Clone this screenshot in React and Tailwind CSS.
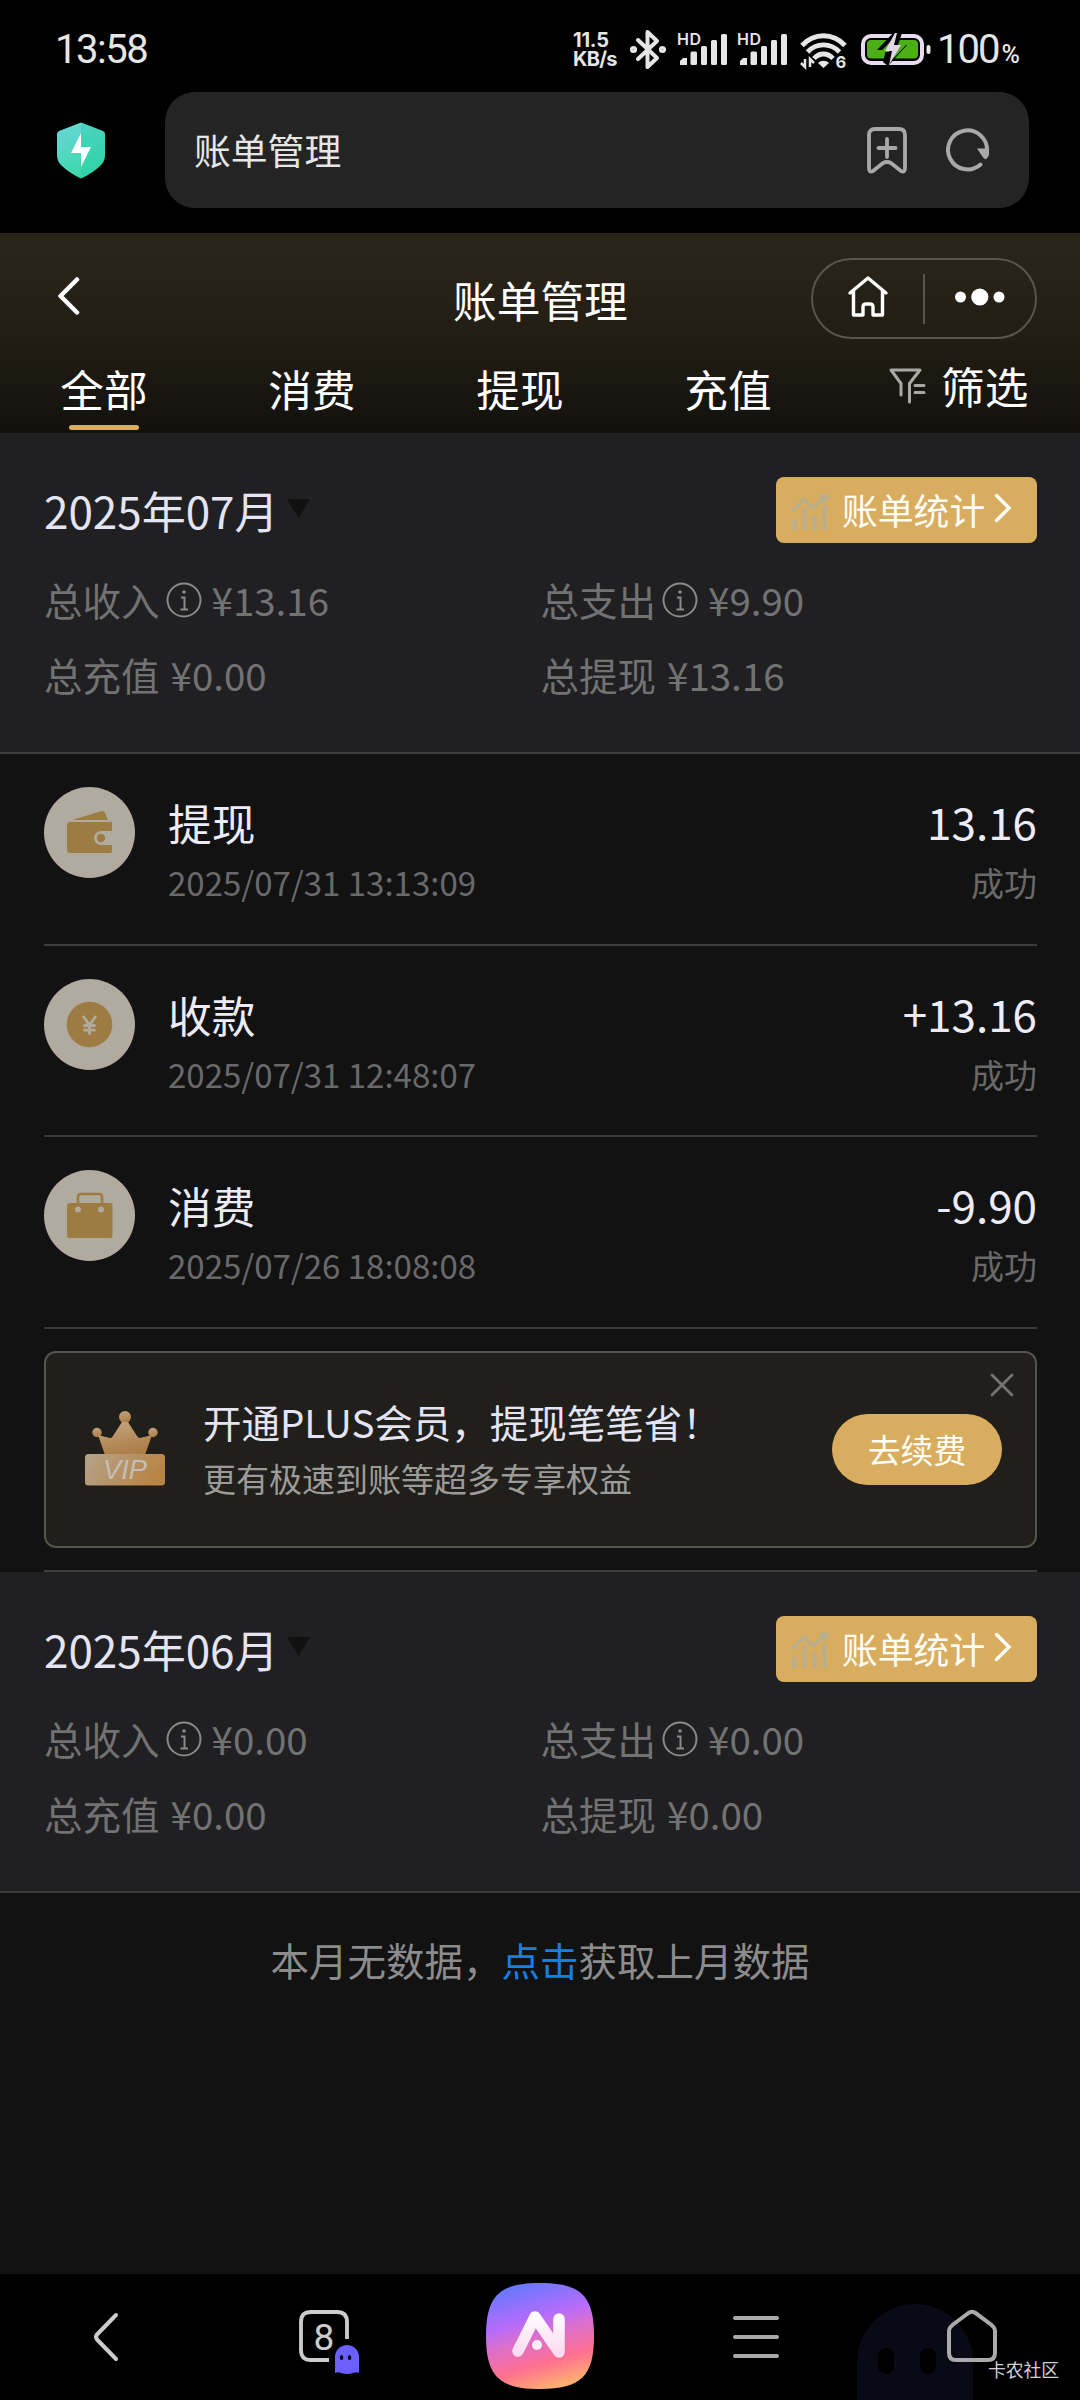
const STATS_JULY = [
  { label: '总收入', value: '¥13.16', info: true },
  { label: '总支出', value: '¥9.90', info: true },
  { label: '总充值', value: '¥0.00' },
  { label: '总提现', value: '¥13.16' },
];

const STATS_JUNE = [
  { label: '总收入', value: '¥0.00', info: true },
  { label: '总支出', value: '¥0.00', info: true },
  { label: '总充值', value: '¥0.00' },
  { label: '总提现', value: '¥0.00' },
];

const RECORDS = [
  { icon: WalletIcon, title: '提现', time: '2025/07/31 13:13:09', amount: '13.16' },
  { icon: CoinIcon, title: '收款', time: '2025/07/31 12:48:07', amount: '+13.16' },
  { icon: BagIcon, title: '消费', time: '2025/07/26 18:08:08', amount: '-9.90' },
];

const TABS = ['全部', '消费', '提现', '充值'];

/* ---------- 状态栏 ---------- */

function Signal() {
  return (
    <svg width="52" height="40" viewBox="0 0 52 40" fill="#e6e6e6">
      <text x="0" y="16.500" fontSize="16" fontWeight="600" textLength="24" fontFamily="Inter, sans-serif">HD</text>
      <path d="M3 37v-4l3-3h4v7z" />
      <rect x="13.500" y="23.500" width="6.500" height="13.500" rx="1.500" />
      <rect x="24" y="18" width="6" height="19" rx="1.500" />
      <rect x="34" y="12" width="6" height="25" rx="1.500" />
      <rect x="44" y="6" width="6" height="31" rx="1.500" />
    </svg>
  );
}

function StatusBar() {
  return (
    <div className="flex h-[92px] items-start pt-7 text-[#e6e6e6]">
      <div className="ml-[55px] flex-1 font-[Roboto,sans-serif] text-[40px] leading-[43px] tracking-[-1.500px]">13:58</div>
      <div className="mt-[3px] w-[57px] font-[Inter,sans-serif] text-[20px] leading-[19px] font-bold">
        <div className="tracking-[-0.200px]">11.5</div>
        <div className="tracking-[-0.700px]">KB/s</div>
      </div>
      <svg className="mr-[11px]" width="36" height="42" viewBox="0 0 36 42" fill="none" stroke="#e6e6e6" strokeWidth="4" strokeLinejoin="round" strokeLinecap="round">
        <path d="M8 12l19 18-9.500 9V4l9.500 9L8 31" />
        <circle cx="3.500" cy="21.500" r="1.600" />
        <circle cx="32.500" cy="21.500" r="1.600" />
      </svg>
      <div className="mr-[8px]"><Signal /></div>
      <div className="mr-[11px]"><Signal /></div>
      <svg className="mr-[14px]" width="47" height="42" viewBox="0 0 47 42" fill="none" stroke="#e6e6e6" strokeWidth="4.800">
        <path d="M2 17.500c12-13 31-13 43 0M7.500 24c9-9.500 23-9.500 32 0M14 30.500c5.500-6 13.500-6 19 0" />
        <path d="M18 35c3-3 8-3 11 0l-5.500 5z" fill="#e6e6e6" stroke="none" />
        <path d="M5 31v8l-4-4M10 39v-8l4 4" strokeWidth="2.500" />
        <text x="35.500" y="40" fontSize="16.500" fontWeight="700" fill="#e6e6e6" stroke="none" fontFamily="Inter, sans-serif">6</text>
      </svg>
      <svg className="mr-[6px]" width="70" height="42" viewBox="0 0 70 42">
        <rect x="2" y="8" width="59" height="27" rx="8" fill="none" stroke="#eadcf0" strokeWidth="4" />
        <rect x="6" y="12" width="51" height="18.500" rx="4" fill="#4caf16" />
        <rect x="65.500" y="17" width="4" height="9" rx="2" fill="#e6e6e6" />
        <path d="M35 2L16 22h9l-3 12 5 4 19-21h-9l4-12z" fill="#000" />
        <path d="M31 12L19 24h9zM32 31l13-14h-9z" fill="#4caf16" />
        <path d="M34 5L24 23h7l-3 14 12-20h-7l3-12z" fill="#e3d6e8" />
      </svg>
      <div className="flex w-[143px] items-baseline font-[Roboto,sans-serif]">
        <span className="text-[40px] leading-[43px] tracking-[-2px]">100</span>
        <span className="ml-[3px] text-[25px] font-medium">%</span>
      </div>
    </div>
  );
}

function AddressBar() {
  return (
    <div className="flex h-[141px] items-start">
      <svg className="mt-[30px] ml-[57px]" width="48" height="57" viewBox="0 0 48 57">
        <defs>
          <linearGradient id="shield" x1="0" y1="0" x2="0.500" y2="1">
            <stop offset="0" stopColor="#6cd6da" />
            <stop offset="1" stopColor="#3ad8a8" />
          </linearGradient>
        </defs>
        <path d="M24 0.500L46 9q2 .8 2 3v21q0 6-4 10-8 8-20 13.500Q12 51 4 43q-4-4-4-10V12q0-2.200 2-3z" fill="url(#shield)" />
        <path d="M24 .5L46 9q2 .8 2 3v21q0 6-4 10-8 8-20 13.500z" fill="#12c7a0" opacity=".25" />
        <path d="M24 11L14 31h10v14l10-20H24z" fill="#fff" />
      </svg>
      <div className="ml-[60px] flex h-[116px] w-[864px] items-center rounded-[30px] bg-[#242424] pr-[39px] pl-[29px]">
        <span className="flex-1 text-[36.800px] text-[#e6e6e6]">账单管理</span>
        <svg width="42" height="48" viewBox="0 0 42 48" fill="none" stroke="#a8a8a8" strokeWidth="3.800" strokeLinecap="round" strokeLinejoin="round">
          <path d="M9 3h24q6 0 6 6v33q0 5-4 3l-10-8q-4-2-8 0L7 45q-4 2-4-3V9q0-6 6-6zM21 13v18M12.500 22h17" />
        </svg>
        <svg className="ml-[38px]" width="44" height="46" viewBox="0 0 44 46" fill="none" stroke="#a8a8a8" strokeWidth="4" strokeLinecap="round">
          <path d="M34.500 37.500A19.500 19.500 0 1 1 41 24.500" />
          <path d="M31 21.500h12v6q-2.500 7-5.500 3.500z" fill="#a8a8a8" stroke="none" />
        </svg>
      </div>
    </div>
  );
}

/* ---------- 页面头部 ---------- */

function Header() {
  return (
    <div className="h-[200px] bg-linear-to-b from-[#2b2519] via-[#231e14] to-[#12110d]">
      <div className="flex h-[118px] items-start pt-[25px] text-white">
        <svg className="mt-[19px] ml-[57px]" width="24" height="38" viewBox="0 0 24 38" fill="none" stroke="#fff" strokeWidth="4.500" strokeLinecap="round" strokeLinejoin="round">
          <path d="M20 2.500L3.500 19 20 35.500" />
        </svg>
        <h1 className="ml-[372px] w-[358px] text-[43.700px] leading-[82px]">账单管理</h1>
        <div className="flex h-[81px] w-[226px] items-center rounded-full border-2 border-[#5a554c]">
          <svg className="-mt-1 ml-[34px]" width="42" height="44" viewBox="0 0 42 44" fill="none" stroke="#fff" strokeWidth="3.400" strokeLinejoin="round" strokeLinecap="round">
            <path d="M3 18L21 3l18 15M6.500 16.500V40h9.500V32q0-3 3-3h4q3 0 3 3v8h9.500V16.500" />
          </svg>
          <span className="ml-[34px] h-[50px] w-[2px] bg-[#5a554c]" />
          <svg className="-mt-1 ml-[30px]" width="50" height="18" viewBox="0 0 50 18" fill="#fff">
            <circle cx="5.500" cy="9" r="5.500" />
            <circle cx="24.800" cy="9" r="8.600" />
            <circle cx="44" cy="9" r="5.500" />
          </svg>
        </div>
      </div>
      <div className="flex h-[82px] text-[43.700px] text-white">
        {TABS.map((tab, i) => (
          <div key={tab} className="flex w-[208px] flex-col items-center">
            <span className="mt-[7px] leading-[60px]">{tab}</span>
            {i === 0 && <span className="mt-[7px] h-[5px] w-[70px] rounded-full bg-[#d9ae62]" />}
          </div>
        ))}
        <div className="ml-[57px] flex h-[70px] items-center">
          <svg width="37" height="38" viewBox="0 0 37 38" fill="none" stroke="#a9a8a4" strokeWidth="3" strokeLinecap="round" strokeLinejoin="round">
            <path d="M12 28V16.500L2 3h29L20.500 16.500V35M26 18.500h9M26 25.500h9" />
          </svg>
          <span className="ml-[15px]">筛选</span>
        </div>
      </div>
    </div>
  );
}

/* ---------- 月度汇总 ---------- */

function InfoIcon() {
  return (
    <svg className="mr-[10px] ml-[6px]" width="36" height="36" viewBox="0 0 36 36" fill="none" stroke="#8a8a8a" strokeWidth="2">
      <circle cx="18" cy="18" r="16.500" />
      <path d="M15 15.500h3.500V27M14.500 27.500h7.500" />
      <circle cx="18" cy="10" r="1.800" fill="#8a8a8a" stroke="none" />
    </svg>
  );
}

function MonthSummary({ month, stats }) {
  return (
    <div className="h-[321px] border-b-2 border-[#3c3c3c] bg-[#202022] px-[44px] pt-[44px]">
      <div className="flex h-[66px] items-center">
        <span className="text-[44px] leading-[66px] text-[#e4e4f2]">{month}</span>
        <svg className="-mt-1 ml-[8px]" width="23" height="19" viewBox="0 0 23 19" fill="#111">
          <path d="M0 0h23L11.500 19z" />
        </svg>
        <div className="-mr-px ml-auto flex h-[66px] w-[261px] items-center rounded-lg bg-[#d9ad60] pl-[14px] text-[#fffdf5]">
          <svg className="mt-1" width="39" height="39" viewBox="0 0 39 39" fill="none" stroke="#bbae8a" strokeWidth="4.500">
            <path d="M2 18L14 6l9 9L34 4" strokeWidth="3.500" />
            <path d="M4.500 37V26M14.500 37V15M24.500 37V22M34.500 37V12" />
            <circle cx="34" cy="5" r="2.500" />
          </svg>
          <span className="ml-[13px] text-[35.800px]">账单统计</span>
          <svg className="-mt-1 ml-[9px]" width="18" height="30" viewBox="0 0 18 30" fill="none" stroke="#fffdf5" strokeWidth="3.500" strokeLinecap="round">
            <path d="M2.500 2.500L15 15 2.500 27.500" />
          </svg>
        </div>
      </div>
      <div className="mt-5 grid grid-cols-2 gap-x-px text-[38.500px] text-[#727273]">
        {stats.map((s) => (
          <div key={s.label} className="flex h-[74.500px] items-center">
            <span>{s.label}</span>
            {s.info ? <InfoIcon /> : <span className="w-[11px]" />}
            <span>{s.value}</span>
          </div>
        ))}
      </div>
    </div>
  );
}

/* ---------- 账单列表 ---------- */

function WalletIcon() {
  return (
    <svg width="91" height="91" viewBox="0 0 91 91" fill="#9c7c42">
      <path d="M28 33l30-9q2-.5 3 2l3 7z" />
      <path d="M26 35h42v9H57q-7 1-7 7t7 7h11v6q0 2-2 2H26q-3 0-3-3V38q0-3 3-3z" />
      <circle cx="57" cy="51" r="4.200" />
    </svg>
  );
}

function CoinIcon() {
  return (
    <svg width="91" height="91" viewBox="0 0 91 91" fill="none" stroke="#b0aa9f" strokeWidth="2.800">
      <circle cx="45.500" cy="45.500" r="22.800" fill="#9c7c42" stroke="none" />
      <path d="M39 37l6.500 9 6.500-9M45.500 46v9.500M39.500 46.500h12M39.500 51h12" />
    </svg>
  );
}

function BagIcon() {
  return (
    <svg width="91" height="91" viewBox="0 0 91 91">
      <path d="M34 35V27q0-3 3-3h18q3 0 3 3v8" fill="none" stroke="#9c7c42" strokeWidth="2.500" />
      <rect x="23" y="33" width="45.500" height="35" rx="2.500" fill="#9c7c42" />
      <circle cx="34" cy="39.500" r="3" fill="#b0aa9f" />
      <circle cx="57" cy="39.500" r="3" fill="#b0aa9f" />
    </svg>
  );
}

function RecordRow({ record }) {
  const Icon = record.icon;
  return (
    <div className="flex h-[191.670px] border-b-2 border-[#3c3c3c]">
      <div className="mt-[33px] h-[91px] w-[91px] rounded-full bg-[#b0aa9f]">
        <Icon />
      </div>
      <div className="ml-[33px] flex-1 pt-[38px]">
        <p className="text-[43.700px] leading-[60px] text-[#ececf8]">{record.title}</p>
        <p className="text-[33px] leading-[61px] text-[#69696a]">{record.time}</p>
      </div>
      <div className="pt-[37px] text-right">
        <p className="text-[44px] leading-[60px] text-[#ececf8]">{record.amount}</p>
        <p className="text-[33px] leading-[63px] text-[#69696a]">成功</p>
      </div>
    </div>
  );
}

function CrownIcon() {
  return (
    <svg width="80" height="78" viewBox="0 0 80 78">
      <defs>
        <linearGradient id="crown" x1="0" y1="0" x2="0.300" y2="1">
          <stop offset="0" stopColor="#c4a680" />
          <stop offset="1" stopColor="#ad7e48" />
        </linearGradient>
        <linearGradient id="plate" x1="0" y1="0" x2="1" y2="0.300">
          <stop offset="0" stopColor="#b3a48c" />
          <stop offset="1" stopColor="#b98546" />
        </linearGradient>
      </defs>
      <g fill="url(#crown)">
        <circle cx="40" cy="7" r="6" />
        <circle cx="12" cy="22.500" r="4.700" />
        <circle cx="68" cy="22.500" r="4.700" />
        <path d="M20 45L13 25l12 3q2 0 3-2l9-14h6l9 14q1 2 3 2l12-3-7 20z" />
      </g>
      <rect x="0" y="44" width="80" height="31.500" rx="3.500" fill="url(#plate)" />
      <text x="18" y="69" fontSize="27" fontStyle="italic" textLength="44" lengthAdjust="spacingAndGlyphs" fill="#c4bfb6" fontFamily="Liberation Sans, sans-serif">VIP</text>
    </svg>
  );
}

function VipCard() {
  return (
    <div className="border-b-2 border-[#3c3c3c] py-[22px]">
      <div className="relative flex h-[197px] items-center rounded-xl border-2 border-[#55534e] bg-[#201f1b] pl-[39px]">
        <CrownIcon />
        <div className="ml-[38px] flex-1 pt-px">
          <p className="text-[38.500px] leading-[57px] text-[#e4e4f2]">开通PLUS会员，提现笔笔省！</p>
          <p className="text-[33px] leading-[56px] text-[#9c9b98]">更有极速到账等超多专享权益</p>
        </div>
        <button className="mr-[33px] h-[71px] w-[170px] rounded-full bg-[#d9ad60] pb-px text-[32.800px] text-[#fffdf5]">去续费</button>
        <svg className="absolute top-[20px] right-[21px]" width="24" height="24" viewBox="0 0 24 24" stroke="#74736f" strokeWidth="2.800" strokeLinecap="round">
          <path d="M2 2l20 20M22 2L2 22" />
        </svg>
      </div>
    </div>
  );
}

/* ---------- 底部导航 ---------- */

function BottomNav() {
  return (
    <div className="relative grid h-[126px] grid-cols-5 items-start overflow-hidden bg-black">
      {/* 右下角的小幽灵 */}
      <svg className="absolute top-[30px] left-[857px]" width="116" height="96" viewBox="0 0 116 96">
        <path d="M0 96V58a58 58 0 0 1 116 0v38z" fill="#0a0916" />
        <rect x="21" y="44" width="16" height="26" rx="8" fill="#000" />
        <rect x="63" y="44" width="16" height="26" rx="8" fill="#000" />
      </svg>
      <svg className="mt-[38px] ml-[92px]" width="28" height="50" viewBox="0 0 28 50" fill="none" stroke="#ccc" strokeWidth="4" strokeLinecap="round" strokeLinejoin="round">
        <path d="M24 3L5 22.500q-2 2.500 0 5L24 47" />
      </svg>
      <svg className="mt-[36px] ml-[83px]" width="62" height="66" viewBox="0 0 62 66" fill="none">
        <path d="M30 50H12q-10 0-10-10V12Q2 2 12 2h26q10 0 10 10v17" stroke="#ccc" strokeWidth="3.800" />
        <text x="25" y="39.500" fontSize="37" textAnchor="middle" fill="#ccc" fontFamily="Roboto, sans-serif">8</text>
        <path d="M36 63V47a12 12 0 0 1 24 0v16q-3-1.500-6 0-6 2-12 0-3-1.500-6 0z" fill="#6b60ff" />
        <ellipse cx="42.500" cy="47.500" rx="1.700" ry="2.600" fill="#000" />
        <ellipse cx="50.500" cy="47.500" rx="1.700" ry="2.600" fill="#000" />
      </svg>
      <svg className="mt-[9px] ml-[54px]" width="108" height="106" viewBox="0 0 108 106">
        <defs>
          <linearGradient id="ai" x1="0.300" y1="0" x2="0.600" y2="1">
            <stop offset="0" stopColor="#6478ff" />
            <stop offset="0.350" stopColor="#b66cfa" />
            <stop offset="0.500" stopColor="#d96fd0" />
            <stop offset="0.760" stopColor="#ff7090" />
            <stop offset="1" stopColor="#ffb070" />
          </linearGradient>
          <linearGradient id="stroke" x1="0" y1="0" x2="0" y2="1">
            <stop offset="0" stopColor="#fffaff" />
            <stop offset="1" stopColor="#fbdcf0" />
          </linearGradient>
        </defs>
        <path d="M54 0c41 0 54 13 54 53s-13 53-54 53S0 93 0 53 13 0 54 0z" fill="url(#ai)" />
        <path d="M32 68L49 34l24 35V36" fill="none" stroke="url(#stroke)" strokeWidth="11.500" strokeLinecap="round" strokeLinejoin="round" />
        <circle cx="51" cy="62" r="5" fill="#fdf0fb" />
      </svg>
      <svg className="mt-[41px] ml-[85px]" width="46" height="45" viewBox="0 0 46 45" stroke="#aaa" strokeWidth="4" strokeLinecap="round">
        <path d="M2 3h42M2 22h42M2 41h42" />
      </svg>
      <svg className="relative mt-[35px] ml-[83px]" width="50" height="54" viewBox="0 0 50 54" fill="none" stroke="#aaa" strokeWidth="4" strokeLinejoin="round">
        <path d="M21.500 4q3.500-2.500 7 0L44 15.500q4 3 4 7V44q0 7-7 7H9q-7 0-7-7V22.500q0-4 4-7z" />
      </svg>
      <span className="absolute top-[83px] left-[988px] text-[17.800px] leading-[24px] text-[#d0d0d0]">卡农社区</span>
    </div>
  );
}

export default function App() {
  return (
    <div className="flex h-[2400px] w-[1080px] flex-col overflow-hidden bg-black font-['Noto_Sans_CJK_SC',sans-serif]">
      <StatusBar />
      <AddressBar />
      <Header />
      <div className="flex-1 bg-[#121212]">
        <MonthSummary month="2025年07月" stats={STATS_JULY} />
        <div className="pr-[43px] pl-[44px]">
          {RECORDS.map((r) => (
            <RecordRow key={r.time} record={r} />
          ))}
          <VipCard />
        </div>
        <MonthSummary month="2025年06月" stats={STATS_JUNE} />
        <p className="mt-[36px] text-center text-[38.500px] leading-[60px] text-[#8c8c8c]">
          本月无数据，<span className="text-[#1580e0]">点击</span>获取上月数据
        </p>
      </div>
      <BottomNav />
    </div>
  );
}
